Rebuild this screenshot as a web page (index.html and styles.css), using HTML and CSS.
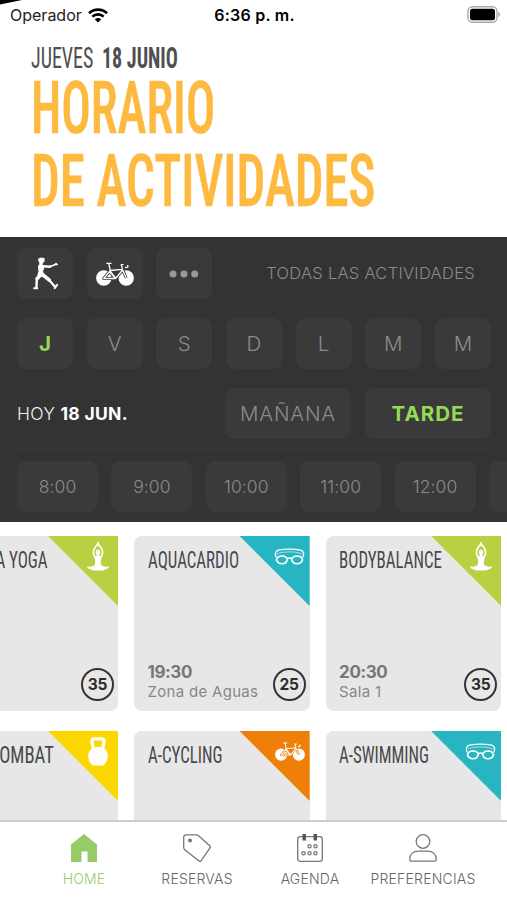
FILE: index.html
```html
<!DOCTYPE html>
<html lang="es">
<head>
<meta charset="utf-8">
<meta name="viewport" content="width=device-width">
<title>Horario de actividades</title>
<link rel="stylesheet" href="styles.css">
</head>
<body>
<svg class="defs" width="0" height="0" aria-hidden="true">
  <symbol id="bike" viewBox="0 0 38 24">
    <circle cx="7.8" cy="16" r="7.7" fill="currentColor"/>
    <circle cx="30.2" cy="16" r="7.7" fill="currentColor"/>
    <g fill="none" stroke-linejoin="round">
      <path class="frame-edge" d="M7.800 16.500 13.500 9.500 19.500 16.500zM19.500 16.500 26.700 8 30.200 16" stroke-width="3"/>
      <path d="M7.800 16.500 13.500 9.500 19.500 16.500zM19.500 16.500 26.700 8 30.200 16M12.900 2l1.500 7.500L19.500 16M14 8.500 26.500 7.300M10.300 1.300h5.200M25.300 2.600l1.200 5M24.600 2.600h3M29 5.600l2.600-.4q1-1-.4-2" stroke="currentColor" stroke-width="1.300"/>
    </g>
  </symbol>
  <symbol id="yoga" viewBox="0 0 22 30">
    <path d="M11 2.200C7.800 5.200 6 8.500 6.400 11.500Q7 14.500 9.400 16M11 2.200c3.200 3 5 6.300 4.600 9.300Q15 14.500 12.600 16" fill="none" stroke="currentColor" stroke-width="1.600"/>
    <path d="M10.300 0h1.400l.7 4h-2.800z" fill="currentColor"/>
    <ellipse cx="11" cy="10.300" rx="2.200" ry="2.800" fill="currentColor"/>
    <path d="M10 12.500h2l.5 1.500 2.300.7L13.700 20l.9 3.600 4 1.200 2.900-.2q.7 1-.2 1.700l-5.300 2.200H6L.7 26.300q-.9-.7-.2-1.700l2.900.2 4-1.200.9-3.600-1.100-5.300 2.300-.7z" fill="currentColor"/>
  </symbol>
  <symbol id="goggles" viewBox="0 0 30 17">
    <g fill="none" stroke="currentColor">
      <path d="M1.800 9.500Q-.8 4 3.800 2.200 15 .2 26.200 2.200 30.800 4 28.200 9.500" stroke-width="1.300"/>
      <path d="M2.200 6.200Q6 3.900 15 3.900t12.800 2.300" stroke-width="1" opacity=".6"/>
      <path d="M2 11.700Q3 8 7.500 8 11.800 8.200 12.800 11.300 12 15.500 7.500 15.700 3 15.500 2 11.700zM28 11.700Q27 8 22.500 8 18.200 8.200 17.200 11.300 18 15.500 22.500 15.700 27 15.500 28 11.700zM12.600 10.800q2.400-1.500 4.800 0" stroke-width="1.600"/>
    </g>
  </symbol>
</svg>

<div class="screen">
  <div class="status">
    <span class="carrier">Operador</span>
    <svg class="wifi" viewBox="0 0 20 15"><path d="M1 5.200a13 13 0 0 1 18 0M4.300 8.600a8.300 8.300 0 0 1 11.400 0" fill="none" stroke="#000" stroke-width="2.600"/><path d="M10 14.500 6.700 11.200q3.300-2.500 6.600 0z"/></svg>
    <span class="clock">6:36 p. m.</span>
    <svg class="battery" viewBox="0 0 34 17"><rect x="1" y=".8" width="29" height="15.400" rx="4.500" fill="#fff" stroke="#aaa" stroke-width="1.400"/><rect x="3" y="2.800" width="25" height="11.400" rx="2.500"/><path d="M31.300 6v5q1.800-.8 1.800-2.500T31.300 6z" fill="#aaa"/></svg>
    <svg class="wedge" viewBox="0 0 22 5"><path d="M0 0h22L0 4.500z"/></svg>
  </div>

  <header class="head">
    <p class="date"><span class="cond day">JUEVES</span><b class="cond num">18 JUNIO</b></p>
    <h1><span class="cond l1">HORARIO</span><span class="cond l2">DE ACTIVIDADES</span></h1>
  </header>

  <section class="filters">
    <div class="row days top">
      <div class="btn">
        <svg class="runner" viewBox="0 0 24 32" fill="none" stroke="#fff" stroke-linecap="round" stroke-linejoin="round">
          <path d="M4.800 3.200Q4.600 1 7 .8q1.200-.7 2.200.1 2.400-.7 2 1.700.3 2.200-1.800 3.200l-.2 2 2 1.500-1.600 5 2 3.800-6 2-1.400-3 1-3.600-.6-4.200 1.400-2.200V5.600z" fill="#fff" stroke="none"/>
          <path d="M9 8.800l7.500.6" stroke-width="2.300"/>
          <path d="M16.500 9.300 21 7.500l2.300-.2M21.300 7.300l1-1" stroke-width="1.500"/>
          <path d="M7.800 16.500 3.900 21" stroke-width="3.600"/>
          <path d="M3.600 21.500l-.4 7.800" stroke-width="2.300"/>
          <path d="M4 30.300H1" stroke-width="1.900"/>
          <path d="M9 17l6.500 5.200" stroke-width="3.600"/>
          <path d="M15.700 22.600l5.300 6" stroke-width="2.200"/>
          <path d="M21 30.200l2.200-3.200" stroke-width="1.900"/>
        </svg>
      </div>
      <div class="btn"><svg class="bike"><use href="#bike"/></svg></div>
      <div class="btn"><svg class="dots" viewBox="0 0 30 8" fill="#999"><circle cx="4" cy="4" r="3.500"/><circle cx="15" cy="4" r="3.500"/><circle cx="25.700" cy="4" r="3.500"/></svg></div>
      <div class="all">TODAS LAS ACTIVIDADES</div>
    </div>
    <div class="row days">
      <div class="btn on">J</div><div class="btn">V</div><div class="btn">S</div><div class="btn">D</div><div class="btn">L</div><div class="btn">M</div><div class="btn">M</div>
    </div>
    <div class="row shift">
      <div class="today">HOY <b>18 JUN.</b></div>
      <div class="btn am">MAÑANA</div>
      <div class="btn on pm">TARDE</div>
    </div>
    <div class="hours">
      <div class="btn">8:00</div><div class="btn">9:00</div><div class="btn">10:00</div><div class="btn">11:00</div><div class="btn">12:00</div><div class="btn"></div>
    </div>
  </section>

  <main class="cards">
    <article class="card">
      <h2 class="cond end yoga-t">A YOGA</h2>
      <div class="corner lime"></div><svg class="ico yoga"><use href="#yoga"/></svg>
      <div class="foot"><span class="seats">35</span></div>
    </article>
    <article class="card">
      <h2 class="cond">AQUACARDIO</h2>
      <div class="corner teal"></div><svg class="ico goggles"><use href="#goggles"/></svg>
      <div class="foot"><div><b>19:30</b><p>Zona de Aguas</p></div><span class="seats">25</span></div>
    </article>
    <article class="card">
      <h2 class="cond">BODYBALANCE</h2>
      <div class="corner lime"></div><svg class="ico yoga"><use href="#yoga"/></svg>
      <div class="foot"><div><b>20:30</b><p>Sala 1</p></div><span class="seats">35</span></div>
    </article>
    <article class="card">
      <h2 class="cond end combat-t">COMBAT</h2>
      <div class="corner yellow"></div>
      <svg class="ico bell" viewBox="0 0 20 29"><path d="M5.700 13 3.900 4.500Q4 1.800 6.200 1.800h7.600q2.200 0 2.300 2.700L14.300 13" fill="none" stroke="#fff" stroke-width="3.300"/><path d="M10 9.800c6 0 9.800 4 9.800 9.400 0 4-1.800 6.800-4.500 9.200H4.700C2 26 .2 23.200.2 19.200.2 13.800 4 9.800 10 9.800z" fill="#fff"/></svg>
    </article>
    <article class="card">
      <h2 class="cond">A-CYCLING</h2>
      <div class="corner orange"></div><svg class="ico bike small"><use href="#bike"/></svg>
    </article>
    <article class="card">
      <h2 class="cond">A-SWIMMING</h2>
      <div class="corner teal"></div><svg class="ico goggles"><use href="#goggles"/></svg>
    </article>
  </main>

  <nav class="tabs">
    <a class="tab active"><svg viewBox="0 0 28 28"><path d="M14 0 27 10.500V28H17.500V17.500h-6V28H1V10.500z" fill="#98cb68"/></svg><span>HOME</span></a>
    <a class="tab"><svg viewBox="0 0 28 28" fill="none" stroke="#777" stroke-width="1.300"><path d="M3 .8h10.500q1 0 1.800.7L27 12q.8.900 0 1.800L17.800 27q-.9.900-1.800 0L1.500 15.500Q.7 14.700.7 13.500V3Q.8.900 3 .8z"/><circle cx="7" cy="6.500" r="1.400" fill="#888"/></svg><span>RESERVAS</span></a>
    <a class="tab"><svg viewBox="0 0 28 28" fill="none" stroke="#777" stroke-width="1.300"><rect x="1.700" y="2.700" width="24.600" height="24.600" rx="2.500"/><path d="M8.200 0v6.500M19.300 0v6.500" stroke="#555" stroke-width="3.400"/><circle cx="13.500" cy="12.200" r="1.600"/><circle cx="19.500" cy="12.200" r="1.600"/><circle cx="7.500" cy="19.300" r="1.600"/><circle cx="13.500" cy="19.300" r="1.600"/><circle cx="19.500" cy="19.300" r="1.600"/></svg><span>AGENDA</span></a>
    <a class="tab"><svg viewBox="0 0 28 28" fill="none" stroke="#777" stroke-width="1.300"><circle cx="14" cy="7.500" r="6.800"/><path d="M.8 25.500C.8 20 4.500 17.200 9.500 17.200h9c5 0 8.700 2.800 8.700 8.300q0 1.700-1.500 1.700H2.300Q.8 27.200.8 25.500z"/></svg><span>PREFERENCIAS</span></a>
  </nav>
</div>
</body>
</html>
```
FILE: styles.css
```css
* { box-sizing: border-box; }
body, h1, h2, p { margin: 0; }
body { background: #fff; font-family: Inter, sans-serif; }
.defs { position: absolute; }
svg { display: block; flex: none; }
.screen { width: 507px; height: 900px; overflow: hidden; display: flex; flex-direction: column; }

.cond {
  display: inline-block;
  font-family: Roboto, sans-serif;
  font-stretch: 75%;
  white-space: nowrap;
  transform: scaleX(.69);
  transform-origin: 0 50%;
}

/* status bar */
.status { position: relative; height: 30px; display: grid; grid-template-columns: 1fr auto 1fr; align-items: center; padding: 0 8px 0 10px; }
.carrier { font-size: 16px; color: #222; grid-area: 1 / 1; }
.wifi { width: 20px; height: 15px; grid-area: 1 / 1; margin-left: 78px; }
.clock { font-size: 16px; font-weight: 600; letter-spacing: .25px; grid-area: 1 / 2; }
.battery { width: 34px; height: 17px; justify-self: end; margin-right: -2px; margin-top: -2px; grid-area: 1 / 3; }
.wedge { position: absolute; left: 0; top: 0; width: 22px; height: 5px; }

/* heading */
.head { height: 207px; padding: 10px 0 0 31px; }
.date { height: 34px; display: flex; font-size: 29px; line-height: 36px; color: #4d4f50; }
.day { width: 71px; }
h1 { display: flex; flex-direction: column; align-items: flex-start; color: #fdb940; font-weight: 500; font-size: 72px; line-height: 73px; margin-top: -2px; -webkit-text-stroke: .6px #fdb940; }
h1 .l1 { transform: scaleX(.682); }
h1 .l2 { transform: scaleX(.705); }

/* filter panel */
.filters { height: 285px; background: #333; padding-left: 17px; padding-top: 11px; overflow: hidden; color: #8b8b8b; }
.btn { height: 51px; border-radius: 9px; background: #3a3a3a; display: flex; align-items: center; justify-content: center; font-size: 20.500px; font-weight: 300; }
.on { color: #96d957; font-weight: 700; }
.row { width: 474px; height: 70px; display: grid; grid-template-rows: 60px 2px; align-items: start; }
.row::after { content: ""; height: 2px; background: #363636; grid-column: 1 / -1; }
.days { grid-template-columns: repeat(7, 56px); justify-content: space-between; }
.all { grid-column: 4 / 8; justify-self: end; margin-right: 16px; line-height: 51px; font-size: 16.500px; font-weight: 300; letter-spacing: .27px; white-space: nowrap; }
.runner { width: 25px; height: 33px; }
.bike { width: 38px; height: 24px; color: #fff; --edge: #3a3a3a; }
.frame-edge { stroke: var(--edge); }
.dots { width: 30px; height: 8px; }
.shift { grid-template-columns: 1fr 126px 126px; column-gap: 14px; height: 73px; }
.today { line-height: 51px; font-size: 17.500px; letter-spacing: .3px; color: #f0f0f0; font-weight: 300; }
.today b { font-weight: 700; color: #fff; }
.am { letter-spacing: .8px; }
.pm { letter-spacing: 1px; }
.hours { display: flex; gap: 13.400px; width: 640px; }
.hours .btn { width: 81px; flex: none; font-size: 17.500px; font-weight: 350; letter-spacing: .1px; }

/* activity cards */
.cards { flex: 1; min-height: 0; overflow: hidden; padding-top: 14px; display: grid; grid-template-columns: repeat(3, 175.600px); grid-auto-rows: 175px; gap: 20px 16px; margin-left: -57.600px; }
.card { position: relative; background: #e7e7e7; border-radius: 8px 0 8px 8px; padding: 9px 11px 9px 13.500px; display: flex; flex-direction: column; justify-content: space-between; align-items: stretch; }
.card h2 { align-self: flex-start; font-size: 24.500px; line-height: 30px; font-weight: 400; color: #484a4b; }
.card .end { align-self: flex-end; transform-origin: 100% 50%; margin-right: 59px; }
.card .combat-t { margin-right: 53px; transform: scaleX(.76); }
.corner { position: absolute; top: 0; right: 0; width: 70px; height: 70px; clip-path: polygon(0 0, 100% 0, 100% 100%); }
.lime { background: #b9d043; }
.teal { background: #27b5c1; }
.yellow { background: #fdd800; }
.orange { background: #f07f0a; }
.ico { position: absolute; color: #fff; }
.ico.yoga { width: 22px; height: 30px; top: 6px; right: 9px; }
.ico.goggles { width: 31px; height: 17px; top: 12px; right: 5px; }
.ico.bell { width: 20px; height: 29px; top: 6px; right: 10.500px; }
.ico.bike.small { width: 30px; height: 19px; top: 11px; right: 5px; --edge: #f07f0a; }
.foot { display: flex; justify-content: space-between; align-items: flex-end; margin-right: -7px; color: #888; }
.foot b { display: block; font-size: 17px; line-height: 20px; letter-spacing: -.4px; color: #777; }
.foot p { font-size: 15px; line-height: 18px; letter-spacing: .3px; white-space: nowrap; margin-bottom: 1px; }
.foot b + p { margin-top: 1px; }
.seats { width: 33px; height: 33px; border: 2px solid #333; border-radius: 50%; display: flex; align-items: center; justify-content: center; font-size: 15.500px; font-weight: 700; letter-spacing: -.3px; color: #2c2c2c; margin-left: auto; margin-bottom: 1px; flex: none; }

/* tab bar */
.tabs { height: 80px; border-top: 2px solid #ccc; padding: 12px 27.500px 0; display: grid; grid-template-columns: repeat(4, 113px); background: #fff; }
.tab { display: flex; flex-direction: column; align-items: center; color: #666; font-size: 14px; letter-spacing: .2px; gap: 8px; font-weight: 350; }
.tab svg { width: 28px; height: 28px; }
.tab span { line-height: 17px; }
.active { color: #98cb68; }
```
